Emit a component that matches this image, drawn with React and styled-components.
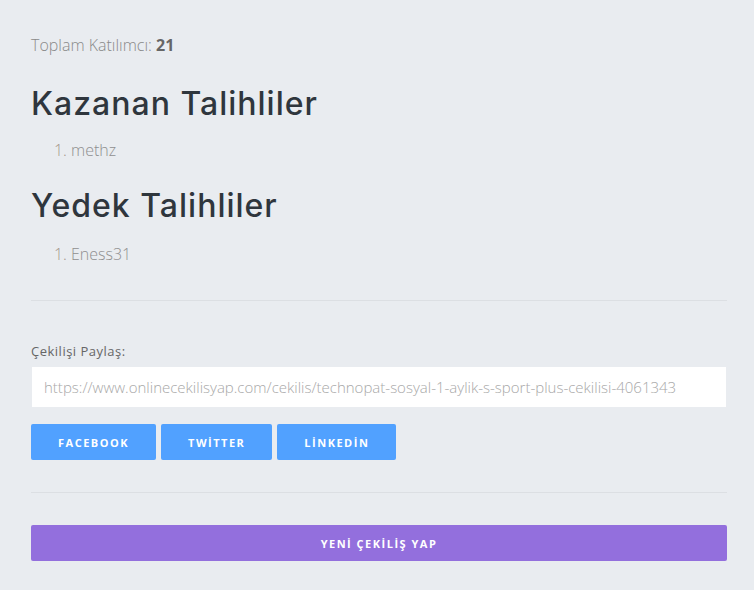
import React from 'react';
import styled, { createGlobalStyle } from 'styled-components';

const GlobalStyle = createGlobalStyle`
    html, body {
        margin: 0;
        padding: 0;
        background: #e9ecf0;
    }
    body {
        font-family: "Open Sans", "Liberation Sans", sans-serif;
    }
`;

const Page = styled.div`
    padding: 34px 27px 29px 31px;
`;

const Total = styled.p`
    margin: 0;
    font-size: 16px;
    font-weight: 300;
    color: #8a8a8a;
    line-height: 22px;

    strong {
        font-weight: 700;
        color: #666;
    }
`;

const Heading = styled.h2`
    margin: ${props => props.$first ? '28px' : '25px'} 0 0 0;
    font-family: Inter, "Open Sans", sans-serif;
    font-weight: 550;
    font-size: 32px;
    line-height: 40px;
    color: #2f363d;
    letter-spacing: 1px;
`;

const Winners = styled.ol`
    margin: ${props => props.$gap}px 0 0 0;
    padding-left: 40px;
    font-size: 16px;
    font-weight: 300;
    color: #8f8f8f;
    line-height: 22px;

    li::marker {
        color: #a3968a;
    }
`;

const Divider = styled.hr`
    border: none;
    border-top: 1px solid #dcdfe3;
    margin: ${props => props.$top}px 0 0 0;
`;

const Label = styled.label`
    display: block;
    margin-top: 41px;
    font-size: 13px;
    color: #666;
    letter-spacing: 0.5px;
    line-height: 18px;
`;

const LinkInput = styled.input`
    display: block;
    box-sizing: border-box;
    width: 100%;
    height: 42px;
    margin-top: 6px;
    padding: 0 12px;
    border: 1px solid #e9ecf0;
    background: #fff;
    font-family: "Open Sans", "Liberation Sans", sans-serif;
    font-size: 15px;
    font-weight: 300;
    color: #a8a8a8;
    outline: none;
`;

const ShareRow = styled.div`
    display: flex;
    gap: 5px;
    margin-top: 16px;
`;

const Button = styled.button`
    height: 36px;
    padding: 0 27px;
    border: none;
    border-radius: 2px;
    background: ${props => props.$color};
    color: #fff;
    font-family: "Open Sans", "Liberation Sans", sans-serif;
    font-size: 11px;
    font-weight: 700;
    letter-spacing: 1.5px;
    cursor: pointer;
    width: ${props => props.$wide ? '100%' : 'auto'};
    display: block;
`;

const Footer = styled.div`
    margin-top: 32px;
`;

const App = () => {
    const url = 'https://www.onlinecekilisyap.com/cekilis/technopat-sosyal-1-aylik-s-sport-plus-cekilisi-4061343';
    return (
        <>
            <GlobalStyle />
            <Page>
                <Total>Toplam Katılımcı: <strong>21</strong></Total>

                <Heading $first>Kazanan Talihliler</Heading>
                <Winners $gap={15}>
                    <li>methz</li>
                </Winners>

                <Heading>Yedek Talihliler</Heading>
                <Winners $gap={17}>
                    <li>Eness31</li>
                </Winners>

                <Divider $top={35} />

                <Label>Çekilişi Paylaş:</Label>
                <LinkInput type="text" readOnly value={url} />

                <ShareRow>
                    <Button $color="#51a1ff">FACEBOOK</Button>
                    <Button $color="#51a1ff">TWİTTER</Button>
                    <Button $color="#51a1ff">LİNKEDİN</Button>
                </ShareRow>

                <Divider $top={32} />

                <Footer>
                    <Button $color="#936fdd" $wide>YENİ ÇEKİLİŞ YAP</Button>
                </Footer>
            </Page>
        </>
    );
};

export default App;
